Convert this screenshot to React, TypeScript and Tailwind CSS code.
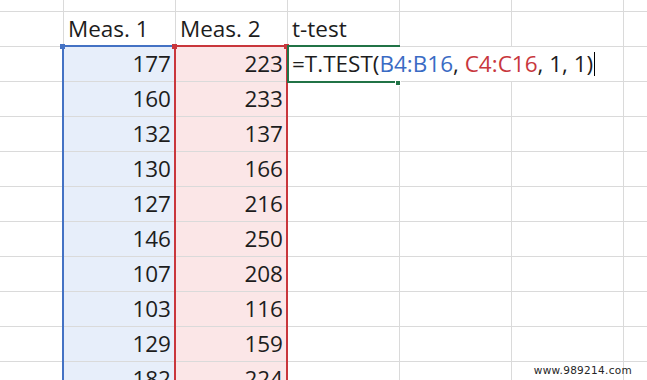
const measA = [177, 160, 132, 130, 127, 146, 107, 103, 129, 182]
const measB = [223, 233, 137, 166, 216, 250, 208, 116, 159, 224]

const font = { fontFamily: '"Open Sans", "Noto Sans", sans-serif' }

const Cell = ({
  children,
  first,
  className = "",
}: {
  children?: React.ReactNode
  first?: boolean
  className?: string
}) => (
  <div
    className={`flex shrink-0 items-end border-r border-b border-[#dadada] px-[4px] pb-[3px] ${
      first ? "w-[64px]" : "w-[112px]"
    } ${className}`}
  >
    {children}
  </div>
)

const Row = ({ children, top }: { children: React.ReactNode; top?: boolean }) => (
  <div className={`flex ${top ? "h-[12px]" : "h-[35px]"}`}>{children}</div>
)

export default function App() {
  return (
    <div
      className="relative h-[380px] w-[647px] overflow-hidden bg-white text-[22.5px] leading-[28px] text-[#1d1d1d]"
      style={font}
    >
      <Row top>
        <Cell first />
        <Cell />
        <Cell />
        <Cell />
        <Cell />
        <Cell />
        <Cell />
      </Row>
      <Row>
        <Cell first />
        <Cell>Meas. 1</Cell>
        <Cell>Meas. 2</Cell>
        <Cell>t-test</Cell>
        <Cell />
        <Cell />
        <Cell />
      </Row>
      {measA.map((a, i) => (
        <Row key={i}>
          <Cell first />
          <Cell className="justify-end bg-[#e7eefa]">{a}</Cell>
          <Cell className="justify-end bg-[#fbe6e7]">{measB[i]}</Cell>
          <Cell className="whitespace-nowrap">
            {i === 0 && (
              <span className="relative z-10 -mb-[3px] flex h-[34px] items-end bg-white pr-[4px] pb-[3px]">
                =T.TEST(<span className="text-[#3a6bc4]">B4:B16</span>,&nbsp;
                <span className="text-[#c8373d]">C4:C16</span>, 1, 1)
                <span className="mb-[2px] ml-[1px] inline-block h-[24px] w-px bg-black" />
              </span>
            )}
          </Cell>
          <Cell />
          <Cell />
          <Cell />
        </Row>
      ))}

      {/* range highlights */}
      <div className="pointer-events-none absolute top-[45px] left-[62px] h-[400px] w-[114px] border-2 border-[#4472c4]" />
      <div className="pointer-events-none absolute top-[45px] left-[174px] h-[400px] w-[114px] border-2 border-[#c9363c]" />
      <div className="absolute top-[44px] left-[60px] h-[5px] w-[5px] bg-[#4472c4]" />
      <div className="absolute top-[44px] left-[172px] h-[5px] w-[5px] bg-[#c9363c]" />
      <div className="absolute top-[44px] left-[284px] h-[5px] w-[5px] bg-[#c9363c]" />

      {/* active cell */}
      <div className="pointer-events-none absolute top-[45px] left-[287px] h-[38px] w-[113px] border-2 border-[#217346]" />
      <div className="absolute top-[80px] left-[395px] z-20 h-[6px] w-[6px] border border-white bg-[#217346]" />

      <div
        className="absolute right-[15px] bottom-[4px] text-[10.5px] leading-[12px] tracking-[0.3px] text-[#262626]"
        style={{ fontFamily: '"DejaVu Sans", Verdana, sans-serif' }}
      >
        www.989214.com
      </div>
    </div>
  )
}
